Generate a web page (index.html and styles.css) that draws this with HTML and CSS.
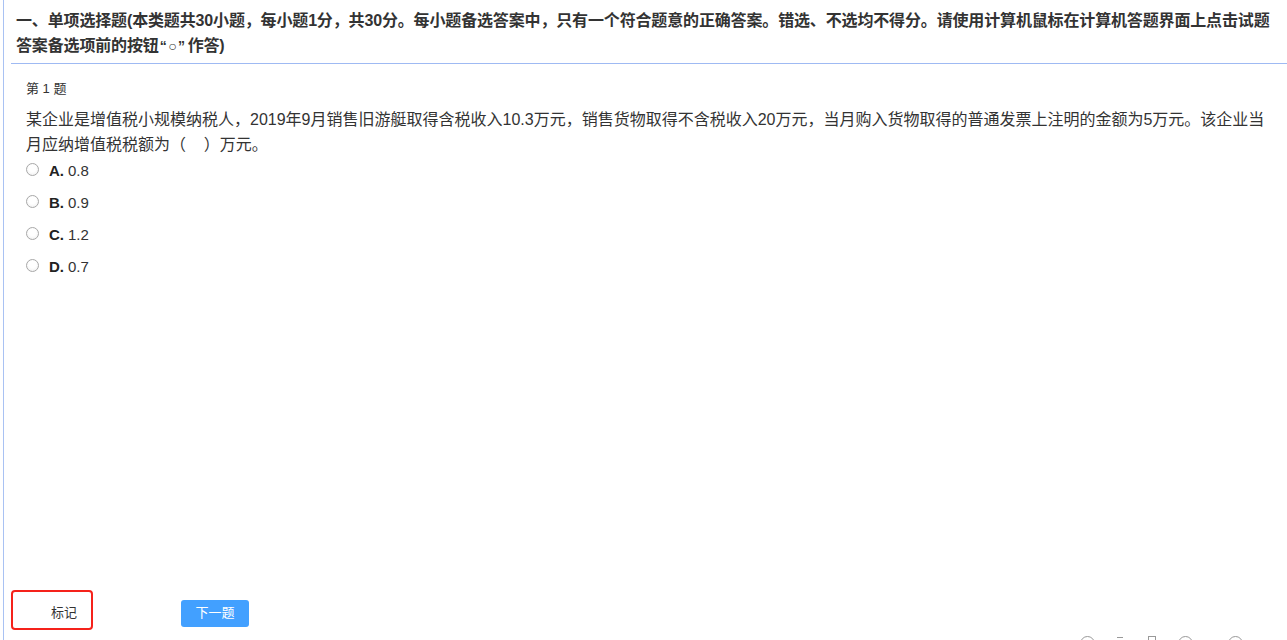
FILE: index.html
```html
<!DOCTYPE html>
<html lang="zh-CN">
<head>
<meta charset="utf-8">
<title>单项选择题</title>
<link rel="stylesheet" href="styles.css">
</head>
<body>
<div class="page">
  <div class="content">
    <div class="section-head">一、单项选择题(本类题共30小题，每小题1分，共30分。每小题备选答案中，只有一个符合题意的正确答案。错选、不选均不得分。请使用计算机鼠标在计算机答题界面上点击试题答案备选项前的按钮<span class="quote">“○”</span>作答)</div>
    <div class="question">
      <div class="q-no">第 1 题</div>
      <div class="q-text">某企业是增值税小规模纳税人，2019年9月销售旧游艇取得含税收入10.3万元，销售货物取得不含税收入20万元，当月购入货物取得的普通发票上注明的金额为5万元。该企业当月应纳增值税税额为（&nbsp;&nbsp;&nbsp;&nbsp;）万元。</div>
      <ul class="options">
        <li class="option"><span class="radio"></span><b class="opt-key">A.</b><span class="opt-val">0.8</span></li>
        <li class="option"><span class="radio"></span><b class="opt-key">B.</b><span class="opt-val">0.9</span></li>
        <li class="option"><span class="radio"></span><b class="opt-key">C.</b><span class="opt-val">1.2</span></li>
        <li class="option"><span class="radio"></span><b class="opt-key">D.</b><span class="opt-val">0.7</span></li>
      </ul>
    </div>
  </div>
  <div class="actions">
    <div class="mark-btn">标记</div>
    <div class="next-btn">下一题</div>
  </div>
  <div class="status">
    <span class="st-circle"></span>
    <span class="st-dot"></span>
    <span class="st-rect"></span>
    <span class="st-circle st-c2"></span>
    <span class="st-text">1</span>
    <span class="st-circle st-c3"></span>
    <span class="st-text">100%</span>
  </div>
</div>
</body>
</html>
```
FILE: styles.css
```css
html, body {
  margin: 0;
  padding: 0;
  overflow: hidden;
  background: #fff;
}
body {
  font-family: "Liberation Sans", "Noto Sans CJK SC", sans-serif;
  color: #333;
}
.page {
  margin-left: 3px;
  border-left: 1px solid #a9c2f3;
  height: 660px;
  display: flex;
  flex-direction: column;
}
.content {
  height: 590px;
  flex-shrink: 0;
}
.section-head {
  margin-left: 7px;
  padding: 8px 4px 4px 5px;
  border-bottom: 1px solid #9fbaf3;
  font-size: 16px;
  font-weight: bold;
  line-height: 25px;
  color: #333;
  letter-spacing: -0.15px;
}
.quote {
  font-family: "Liberation Sans", sans-serif;
  font-size: 14px;
  letter-spacing: 1.5px;
  margin: 0 1px;
}
.question {
  padding: 13px 20px 0 22px;
}
.q-no {
  font-size: 13px;
  line-height: 24px;
  color: #333;
}
.q-text {
  margin-top: 6px;
  font-size: 16px;
  line-height: 25px;
  color: #333;
}
.options {
  list-style: none;
  margin: 0;
  padding: 0;
}
.option {
  display: flex;
  align-items: center;
  height: 32px;
  font-size: 15px;
}
.option:first-child {
  margin-top: -3px;
}
.radio {
  width: 11px;
  height: 11px;
  border: 1px solid #a8a8a8;
  border-radius: 50%;
  background: radial-gradient(circle at 50% 40%, #fff 40%, #ececec 100%);
  margin-right: 10px;
  margin-top: -1px;
}
.opt-key {
  font-weight: bold;
  color: #222;
  margin-right: 4px;
}
.opt-val {
  color: #333;
}
.actions {
  flex-shrink: 0;
  display: flex;
  align-items: flex-start;
  height: 40px;
  padding-left: 7px;
}
.mark-btn {
  box-sizing: border-box;
  width: 82px;
  height: 40px;
  border: 2px solid #f5221b;
  border-radius: 4px;
  font-size: 13px;
  color: #333;
  padding: 12px 0 0 38px;
  line-height: 18px;
}
.next-btn {
  margin-left: 88px;
  margin-top: 10px;
  width: 68px;
  height: 27px;
  background: #42a0ff;
  color: #fff;
  border-radius: 3px;
  font-size: 13px;
  line-height: 26px;
  text-align: center;
}
.status {
  flex-shrink: 0;
  margin-top: 6px;
  height: 20px;
  display: flex;
  align-items: flex-start;
  justify-content: flex-end;
  padding-right: 12px;
  font-size: 11px;
  color: #888;
}
.st-circle {
  width: 13px;
  height: 13px;
  border: 1px solid #999;
  border-radius: 50%;
  margin-right: 22px;
}
.st-dot {
  width: 6px;
  height: 10px;
  border-top: 1px solid #999;
  margin-top: 1px;
  margin-right: 25px;
}
.st-rect {
  width: 6px;
  height: 10px;
  border: 1px solid #999;
  margin-right: 22px;
}
.st-c2 { margin-right: 3px; }
.st-c3 { margin-left: 26px; margin-right: 4px; }
.st-text {
  line-height: 14px;
  margin-top: 1px;
}
```
